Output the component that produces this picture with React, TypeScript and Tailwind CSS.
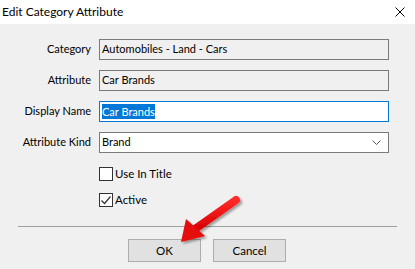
import React from 'react';

const font = { fontFamily: 'Lato, "Noto Sans", sans-serif' };

const Row: React.FC<{ label: string; children: React.ReactNode }> = ({ label, children }) => (
  <div className="flex items-center h-[21px]">
    <div className="w-[92px] text-right pr-[1px] text-[11px] text-black">{label}</div>
    <div className="ml-[7px] w-[290px] h-[21px]">{children}</div>
  </div>
);

const Check: React.FC<{ label: string; checked?: boolean }> = ({ label, checked }) => (
  <div className="flex items-center h-[14px] ml-[99px]">
    <div className="w-[14px] h-[14px] border border-[#333] bg-white flex items-center justify-center">
      {checked && (
        <svg width="12" height="12" viewBox="0 0 12 12">
          <path d="M1.5 6.5 L4.5 9.5 L10.5 2.5" fill="none" stroke="#333" strokeWidth="1.2" />
        </svg>
      )}
    </div>
    <span className="ml-[2px] text-[11.5px] text-black leading-none">{label}</span>
  </div>
);

export default function App() {
  return (
    <div className="relative w-[415px] h-[269px] bg-[#f0f0f0] overflow-hidden" style={font}>
      {/* Title bar */}
      <div className="h-[24px] bg-white flex items-center justify-between pl-[2px] pr-[10px]">
        <span className="text-[12px] text-black">Edit Category Attribute</span>
        <svg width="10" height="10" viewBox="0 0 10 10">
          <path d="M0.5 0.5 L9.5 9.5 M9.5 0.5 L0.5 9.5" stroke="#000" strokeWidth="1" />
        </svg>
      </div>

      <div className="pt-[15px] flex flex-col gap-[10px]">
        <Row label="Category">
          <div className="h-full border border-[#7a7a7a] bg-[#f0f0f0] flex items-center px-[2px] text-[11px]">
            Automobiles - Land - Cars
          </div>
        </Row>
        <Row label="Attribute">
          <div className="h-full border border-[#7a7a7a] bg-[#f0f0f0] flex items-center px-[2px] text-[11px]">
            Car Brands
          </div>
        </Row>
        <Row label="Display Name">
          <div className="h-full border border-[#0078d7] bg-white flex items-center px-[2px] text-[11px]">
            <span className="bg-[#0078d7] text-white leading-[15px]">Car Brands</span>
          </div>
        </Row>
        <Row label="Attribute Kind">
          <div className="h-full border border-[#7a7a7a] bg-white flex items-center justify-between pl-[2px] pr-[7px] text-[11px]">
            <span>Brand</span>
            <svg width="9" height="5" viewBox="0 0 9 5">
              <path d="M0.5 0.5 L4.5 4.5 L8.5 0.5" fill="none" stroke="#555" strokeWidth="1" />
            </svg>
          </div>
        </Row>
      </div>

      <div className="mt-[14px] flex flex-col gap-[12px]">
        <Check label="Use In Title" />
        <Check label="Active" checked />
      </div>

      <div className="mt-[19px] mx-[18px] h-px bg-[#a0a0a0]" />

      <div className="mt-[12px] flex justify-center gap-[12px] pr-[1px]">
        <button className="w-[73px] h-[23px] bg-[#e1e1e1] border border-[#adadad] text-[11.5px] text-black">OK</button>
        <button className="w-[73px] h-[23px] bg-[#e1e1e1] border border-[#adadad] text-[11.5px] text-black">Cancel</button>
      </div>

      {/* Red annotation arrow */}
      <svg className="absolute left-0 top-0 pointer-events-none" width="415" height="269">
        <defs>
          <filter id="sh" x="-20%" y="-20%" width="140%" height="140%">
            <feDropShadow dx="2" dy="2" stdDeviation="1.2" floodColor="#000" floodOpacity="0.35" />
          </filter>
          <linearGradient id="rg" x1="0" y1="0" x2="0" y2="1">
            <stop offset="0" stopColor="#ff2a2a" />
            <stop offset="1" stopColor="#d90000" />
          </linearGradient>
        </defs>
        <g filter="url(#sh)">
          <line x1="236" y1="200" x2="195" y2="229" stroke="url(#rg)" strokeWidth="8" strokeLinecap="round" />
          <polygon points="181,242 186,219 205,236" fill="#e60a0a" />
        </g>
      </svg>
    </div>
  );
}
